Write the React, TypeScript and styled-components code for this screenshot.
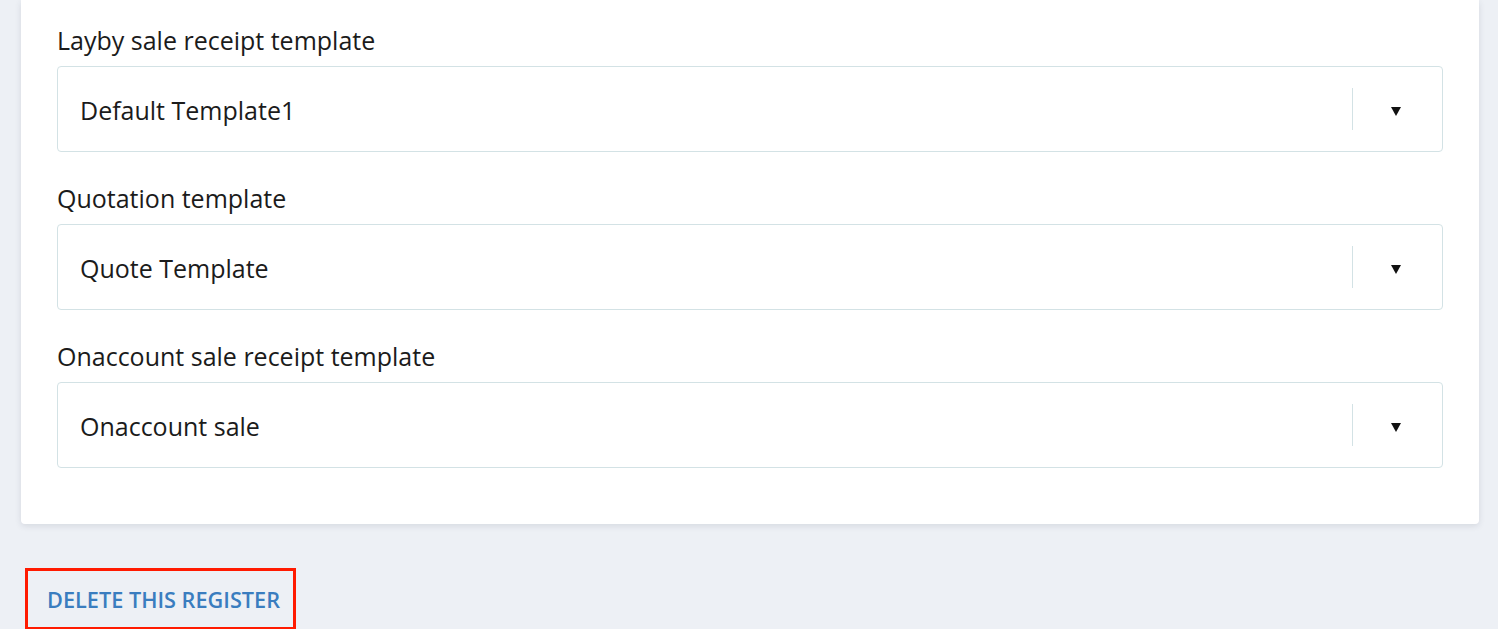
import React from "react";
import styled, { createGlobalStyle } from "styled-components";

const Global = createGlobalStyle`
  html, body { margin: 0; padding: 0; background: #edf0f5; }
  body { font-family: "Open Sans", "Noto Sans", sans-serif; color: #1b1b1b; }
`;

const Page = styled.div`
  padding: 0 19px 0 21px;
`;

const Card = styled.div`
  background: #ffffff;
  border-radius: 0 0 4px 4px;
  box-shadow: 0 2px 6px rgba(40, 50, 70, 0.12);
  padding: 23px 36px 56px;
  display: flex;
  flex-direction: column;
  gap: 29px;
`;

const Field = styled.div`
  display: flex;
  flex-direction: column;
  gap: 9px;
`;

const Label = styled.label`
  font-size: 25px;
  line-height: 34px;
  color: #1b1b1b;
`;

const SelectBox = styled.div`
  height: 86px;
  box-sizing: border-box;
  border: 1px solid #d3e2e5;
  border-radius: 4px;
  display: flex;
  align-items: center;
  padding-left: 22px;
`;

const Value = styled.span`
  flex: 1;
  font-size: 25px;
  color: #1b1b1b;
  padding-top: 2px;
`;

const Divider = styled.span`
  width: 1px;
  height: 42px;
  background: #d3e2e5;
`;

const ArrowWrap = styled.span`
  width: 86px;
  padding-right: 3px;
  display: flex;
  justify-content: center;
  align-items: center;
`;

const Arrow = styled.span`
  width: 0;
  height: 0;
  border-left: 5.5px solid transparent;
  border-right: 5.5px solid transparent;
  border-top: 9px solid #111;
  margin-top: 5px;
`;

const Footer = styled.div`
  padding: 44px 0 0 4px;
`;

const DeleteButton = styled.button`
  border: 3px solid #ff1a00;
  background: transparent;
  padding: 0 13px 0 19px;
  height: 62px;
  font-family: "Open Sans", "Noto Sans", sans-serif;
  font-size: 21.7px;
  font-weight: 600;
  color: #3a7dbf;
  cursor: pointer;
  display: flex;
  align-items: center;
`;

const fields = [
  { label: "Layby sale receipt template", value: "Default Template1" },
  { label: "Quotation template", value: "Quote Template" },
  { label: "Onaccount sale receipt template", value: "Onaccount sale" },
];

export default function App() {
  return (
    <>
      <Global />
      <Page>
        <Card>
          {fields.map((f) => (
            <Field key={f.label}>
              <Label>{f.label}</Label>
              <SelectBox>
                <Value>{f.value}</Value>
                <Divider />
                <ArrowWrap>
                  <Arrow />
                </ArrowWrap>
              </SelectBox>
            </Field>
          ))}
        </Card>
        <Footer>
          <DeleteButton>DELETE THIS REGISTER</DeleteButton>
        </Footer>
      </Page>
    </>
  );
}
